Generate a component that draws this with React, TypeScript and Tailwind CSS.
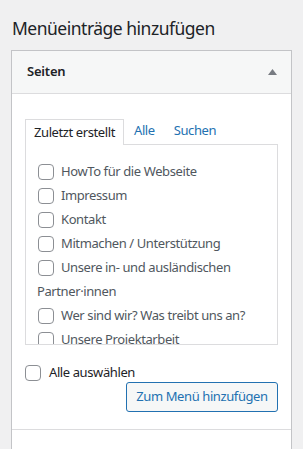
const items = [
  "HowTo für die Webseite",
  "Impressum",
  "Kontakt",
  "Mitmachen / Unterstützung",
  "Unsere in- und ausländischen",
];

const font = { fontFamily: '"Noto Sans", "Open Sans", sans-serif' };

function Box({ className = "" }: { className?: string }) {
  return (
    <span
      className={`inline-block w-4 h-4 shrink-0 rounded-[4px] border border-[#8c8f94] bg-white ${className}`}
    />
  );
}

export default function App() {
  return (
    <div className="w-[303px] h-[449px] overflow-hidden bg-[#f0f0f1] text-[#3c434a]" style={font}>
      <h2 className="pl-3 pt-[15px] h-[50px] text-[17.5px] leading-[26px] tracking-[-0.5px] text-[#1d2327]">Menüeinträge hinzufügen</h2>
      <div className="ml-[11px] w-[281px] border border-[#c3c4c7] bg-white">
        <div className="h-[43px] flex items-center justify-between pl-[15px] pr-[14px] bg-[#f6f7f7] border-b border-[#dcdcde]">
          <span className="text-[13px] font-semibold tracking-[-0.2px] text-[#1d2327]">Seiten</span>
          <svg width="9" height="6" viewBox="0 0 9 6"><path d="M4.5 0L9 6H0z" fill="#787c82" /></svg>
        </div>
        <div className="pl-[13px] pr-[13px] pt-[24px] tracking-[-0.4px]">
          <div className="flex items-end h-[26px] text-[13px]">
            <div className="relative z-10 h-[26px] px-[8px] flex items-center border border-b-0 border-[#dcdcde] bg-white text-[#1d2327] -mb-px">
              Zuletzt erstellt
            </div>
            <span className="ml-[10px] mb-[4px] text-[#2271b1]">Alle</span>
            <span className="ml-[19px] mb-[4px] text-[#2271b1]">Suchen</span>
          </div>
          <div className="h-[201px] overflow-hidden border border-[#dcdcde] pl-[12px] pt-[15px] text-[13px] text-[#50575e]">
            {items.map((t) => (
              <div key={t} className="flex items-center gap-[7px] h-[24px]">
                <Box />
                <span>{t}</span>
              </div>
            ))}
            <div className="h-[24px] flex items-center -ml-px">Partner·innen</div>
            <div className="flex items-center gap-[7px] h-[24px]">
              <Box />
              <span>Wer sind wir? Was treibt uns an?</span>
            </div>
            <div className="flex items-center gap-[7px] h-[24px]">
              <Box />
              <span>Unsere Projektarbeit</span>
            </div>
          </div>
          <div className="flex items-center gap-[8px] mt-[20px] h-[16px] text-[13px] text-[#1d2327]">
            <Box />
            <span>Alle auswählen</span>
          </div>
          <div className="flex justify-end mt-[1px] pb-[17px]">
            <div className="h-[30px] w-[152px] flex items-center justify-center rounded-[3px] border border-[#2271b1] bg-[#f6f7f7] text-[13px] text-[#2271b1]">
              Zum Menü hinzufügen
            </div>
          </div>
        </div>
        <div className="border-t border-[#dcdcde] h-[40px] bg-white pl-[15px] pt-[14px]">
          <span className="text-[13px] font-semibold tracking-[-0.2px] text-[#1d2327]">Beiträge</span>
        </div>
      </div>
    </div>
  );
}
